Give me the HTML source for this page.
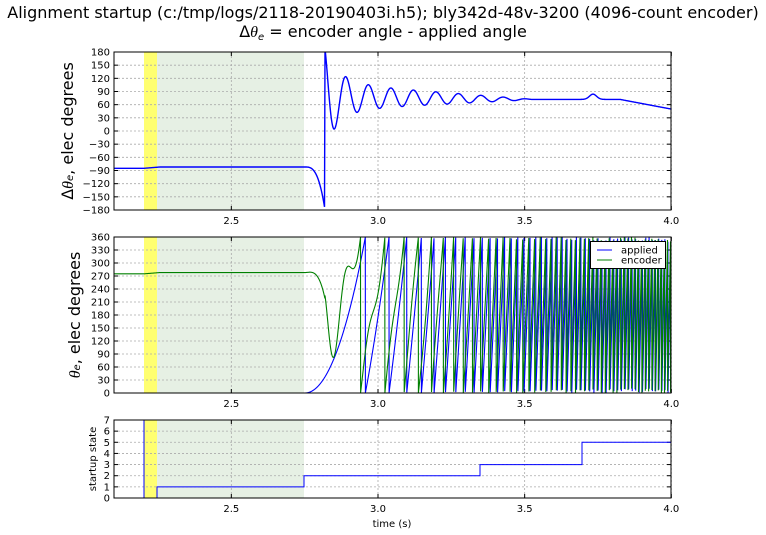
<!DOCTYPE html>
<html><head><meta charset="utf-8"><style>
html,body{margin:0;padding:0;background:#fff;width:766px;height:535px;overflow:hidden}
svg{display:block;font-family:"DejaVu Sans","Liberation Sans",sans-serif}
</style></head><body>
<svg id="s" width="766" height="535" xmlns="http://www.w3.org/2000/svg">
<text x="383" y="18" font-size="16" text-anchor="middle">Alignment startup (c:/tmp/logs/2118-20190403i.h5); bly342d-48v-3200 (4096-count encoder)</text>
<text x="383" y="37" font-size="16" text-anchor="middle">Δ<tspan font-family="Liberation Serif" font-style="italic">θ</tspan><tspan font-size="10" dy="3" font-style="italic">e</tspan><tspan dy="-3"> =  encoder angle - applied angle</tspan></text>
<text transform="translate(73,131) rotate(-90)" font-size="16" text-anchor="middle">Δ<tspan font-style="italic" font-family="Liberation Serif">θ</tspan><tspan font-size="10" font-style="italic">e</tspan>, elec degrees</text>
<text transform="translate(80,315) rotate(-90)" font-size="16" text-anchor="middle"><tspan font-style="italic" font-family="Liberation Serif">θ</tspan><tspan font-size="10" font-style="italic">e</tspan>, elec degrees</text>
<text transform="translate(96,459) rotate(-90)" font-size="10" text-anchor="middle">startup state</text>
<text x="392" y="527" font-size="10" text-anchor="middle">time (s)</text>
<g id="g"></g>
</svg>
<script>
var g=document.getElementById('g'),h='';
function X(t){return 114+(t-2.1)*293.33;}
function d(x){
 if(x<325){
  var v=x<144?-85:(x<160?-85+3*(x-144)/16:-82);
  if(x>305){v-=98*Math.pow((x-305)/20,3);}
  return Math.max(v,-180);
 }
 var s=x-325,A;
 var base=25*Math.max(0,1-Math.max(0,s-40)/170);
 A=base+95*Math.exp(-s/14);
 var m=78-6*Math.min(1,s/200);
 if(s>295)m-=(s-295)*0.43;
 m+=12*Math.exp(-Math.pow((x-593)/5,2));
 return m+A*Math.cos(2*Math.PI*(s-21)/22.5);
}
function app(x){var s=x-305;return s<=0?0:0.0907*s*s+1.34e-4*s*s*s;}
function mod(v){v%=360;if(v<0)v+=360;return v;}
var axes=[[52,210,-180,180,30],[237,393,0,360,30],[420,498,0,7,1]];
axes.forEach(function(a){
 h+='<rect x="157" y="'+a[0]+'" width="147" height="'+(a[1]-a[0])+'" fill="#e6f0e4"/>';
 h+='<rect x="144" y="'+a[0]+'" width="13" height="'+(a[1]-a[0])+'" fill="#ffff70"/>';
});
axes.forEach(function(a,i){
 var y0=a[0],y1=a[1];
 function Y(v){return y1-(v-a[2])/(a[3]-a[2])*(y1-y0);}
 for(var v=a[2];v<=a[3]+1e-9;v+=a[4]){
  var y=Y(v);
  h+='<line x1="114" x2="671" y1="'+y+'" y2="'+y+'" stroke="#aaa" stroke-width="0.8" stroke-dasharray="2,2"/>';
  h+='<line x1="114" x2="118" y1="'+y+'" y2="'+y+'" stroke="#000"/><line x1="667" x2="671" y1="'+y+'" y2="'+y+'" stroke="#000"/>';
  var lab=(v<0?'\u2212'+(-v):''+v);
  h+='<text x="110" y="'+(y+3.5)+'" font-size="10" text-anchor="end">'+lab+'</text>';
 }
 [2.5,3.0,3.5,4.0].forEach(function(t){var x=X(t);
  h+='<line x1="'+x+'" x2="'+x+'" y1="'+y0+'" y2="'+y1+'" stroke="#aaa" stroke-width="0.8" stroke-dasharray="2,2"/>';
  h+='<line x1="'+x+'" x2="'+x+'" y1="'+(y1-4)+'" y2="'+y1+'" stroke="#000"/><line x1="'+x+'" x2="'+x+'" y1="'+y0+'" y2="'+(y0+4)+'" stroke="#000"/>';
  h+='<text x="'+x+'" y="'+(y1+14)+'" font-size="10" text-anchor="middle">'+t.toFixed(1)+'</text>';});
});
var p='M114 '+(131+85*158/360);
for(var x=114;x<=671;x+=0.5){var v=d(x);if(x>=325&&x<325.5){p+=' L325 52';}p+=' L'+x+' '+(131-v*158/360).toFixed(2);}
h+='<svg x="114" y="52" width="557" height="158" viewBox="114 52 557 158" overflow="hidden"><path d="'+p+'" fill="none" stroke="#00f" stroke-width="1.4"/></svg>';
var pb='',pg='';
for(var x=114;x<=671;x+=0.1){
 var a=app(x),e=mod(a+d(x));
 pb+=(pb?' L':'M')+x.toFixed(2)+' '+(393-mod(a)*156/360).toFixed(2);
 pg+=(pg?' L':'M')+x.toFixed(2)+' '+(393-e*156/360).toFixed(2);
}
h+='<svg x="114" y="237" width="557" height="156" viewBox="114 237 557 156" overflow="hidden"><path d="'+pb+'" fill="none" stroke="#00f" stroke-width="1.1"/><path d="'+pg+'" fill="none" stroke="#008000" stroke-width="1.1"/></svg>';
function YB(v){return 498-v*78/7;}
h+='<path d="M144 '+YB(7)+' L144 '+YB(0)+' L157 '+YB(0)+' L157 '+YB(1)+' L304 '+YB(1)+' L304 '+YB(2)+' L480 '+YB(2)+' L480 '+YB(3)+' L582 '+YB(3)+' L582 '+YB(5)+' L671 '+YB(5)+'" fill="none" stroke="#00f" stroke-width="1"/>';
axes.forEach(function(a){h+='<rect x="114" y="'+a[0]+'" width="557" height="'+(a[1]-a[0])+'" fill="none" stroke="#000" stroke-width="1"/>';});
h+='<rect x="590.5" y="241.5" width="75" height="27" fill="#fff" stroke="#000"/>';
h+='<line x1="597" x2="612" y1="250" y2="250" stroke="#00f"/><line x1="597" x2="612" y1="260" y2="260" stroke="#008000"/>';
h+='<text x="621" y="253.5" font-size="10">applied</text><text x="621" y="263.5" font-size="10">encoder</text>';
g.innerHTML=h;
</script>
</body></html>
